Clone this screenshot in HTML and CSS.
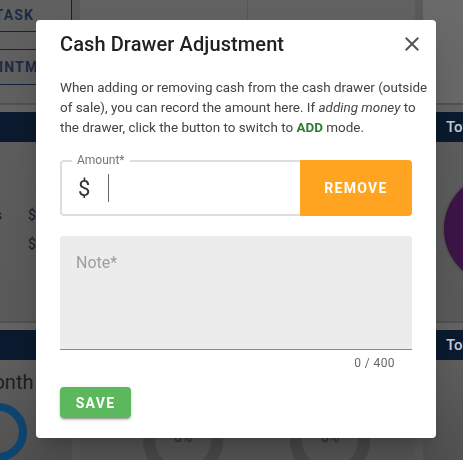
FILE: index.html
```html
<!DOCTYPE html>
<html lang="en">
<head>
<meta charset="utf-8">
<title>Cash Drawer Adjustment</title>
<link rel="stylesheet" href="styles.css">
</head>
<body>
<div class="page">
  <div class="top">
    <div class="side">
      <div class="sbtn sbtn-task"><span class="shift-task">ADD TASK</span></div>
      <div class="sbtn sbtn-appt"><span class="shift-appt">APPOINTMENT</span></div>
    </div>
    <div class="strip"></div>
    <div class="topcard">
      <div class="tcell"></div>
      <div class="tcell"></div>
    </div>
    <div class="strip"></div>
    <div class="rest"></div>
  </div>
  <div class="sep"></div>
  <div class="bar"><span class="bar-title">Totals</span></div>
  <div class="mid">
    <div class="rows">
      <div class="row"><span class="lbl">Sales</span><span class="val">$1</span></div>
      <div class="row"><span class="lbl"></span><span class="val">$</span></div>
    </div>
    <div class="pie"></div>
  </div>
  <div class="sep"></div>
  <div class="bar"><span class="bar-title">Totals</span></div>
  <div class="low">
    <div class="lowside">
      <div class="month">Month</div>
      <div class="donut"></div>
    </div>
    <div class="strip"></div>
    <div class="lowcard">
      <div class="ring"><span>0%</span></div>
      <div class="ring"><span>0%</span></div>
    </div>
    <div class="strip"></div>
  </div>
</div>

<div class="overlay">
  <div class="modal">
    <div class="mhead">
      <h2 class="mtitle">Cash Drawer Adjustment</h2>
      <button class="close" aria-label="Close">
        <svg viewBox="0 0 24 24" width="24" height="24"><path d="M19,6.41L17.59,5L12,10.59L6.41,5L5,6.41L10.59,12L5,17.59L6.41,19L12,13.41L17.59,19L19,17.59L13.41,12L19,6.41Z"/></svg>
      </button>
    </div>
    <p class="desc">When adding or removing cash from the cash drawer (outside<br>of sale), you can record the amount here. If <em>adding money</em> to<br>the drawer, click the button to switch to <strong class="add">ADD</strong> mode.</p>
    <div class="amount">
      <span class="amount-label">Amount*</span>
      <span class="dollar">$</span>
      <span class="caret"></span>
      <button class="remove">REMOVE</button>
    </div>
    <div class="note">
      <span class="note-ph">Note*</span>
    </div>
    <div class="counter">0 / 400</div>
    <div class="actions">
      <button class="save">SAVE</button>
    </div>
  </div>
</div>
</body>
</html>
```

FILE: styles.css
```css
* { box-sizing: border-box; }
html, body { margin: 0; padding: 0; }
body {
  width: 463px;
  height: 460px;
  overflow: hidden;
  font-family: Roboto, "Liberation Sans", Arial, sans-serif;
  background: #606060;
}

/* ---------- dimmed background page ---------- */
.page {
  width: 463px;
  height: 460px;
  display: flex;
  flex-direction: column;
  background: #616161;
  overflow: hidden;
}
.top {
  height: 103px;
  display: flex;
  flex: none;
}
.side {
  width: 72px;
  border-right: 1px solid #14233b;
  overflow: hidden;
  display: flex;
  flex-direction: column;
}
.sbtn {
  font-size: 14px;
  font-weight: 700;
  letter-spacing: 1.2px;
  color: #1d2b45;
  white-space: nowrap;
  display: flex;
  align-items: center;
}
.sbtn-task {
  height: 32px;
  border-bottom: 1px solid #14233b;
  padding-bottom: 2px;
}
.sbtn-appt {
  margin-top: 17px;
  height: 36px;
  border-top: 1px solid #14233b;
  border-bottom: 1px solid #14233b;
}
.shift-task { margin-left: -41px; }
.shift-appt { margin-left: -43px; }
.strip {
  width: 8px;
  flex: none;
  background: #5a5a5a;
}
.top > .strip:first-of-type { margin-left: 10px; }
.topcard {
  width: 335px;
  display: flex;
  background: #626262;
}
.tcell {
  flex: 1;
  border-right: 1px solid #585858;
}
.tcell:last-child { border-right: none; }
.rest { flex: 1; background: #6a6a6a; }

.sep {
  height: 9px;
  flex: none;
  border-top: 2px solid #525252;
  background: #646464;
}
.bar {
  height: 30px;
  flex: none;
  background: #0b1a2f;
  display: flex;
  align-items: center;
  justify-content: flex-end;
}
.bar-title {
  width: 17px;
  overflow: hidden;
  color: #c9ced6;
  font-size: 15px;
  font-weight: 500;
  white-space: nowrap;
}
.mid {
  height: 179px;
  flex: none;
  display: flex;
  justify-content: space-between;
  align-items: center;
  background: linear-gradient(#5e5e5e, #5a5a5a);
}
.rows {
  display: flex;
  flex-direction: column;
  gap: 9px;
  margin-top: -4px;
}
.row {
  display: flex;
  font-size: 14px;
  color: #1c1c1c;
  height: 20px;
  align-items: center;
}
.lbl { width: 28px; text-indent: -32px; overflow: hidden; white-space: nowrap; }
.pie {
  width: 110px;
  height: 110px;
  border-radius: 50%;
  background: #3c1546;
  box-shadow: 0 0 3px rgba(0,0,0,.4);
  margin-right: -91px;
  margin-top: -6px;
}
.low {
  flex: 1;
  display: flex;
  background: linear-gradient(#5f5f5f, #4f4f4f);
}
.lowside {
  width: 72px;
  padding-top: 10px;
  overflow: hidden;
}
.month {
  font-size: 20px;
  color: #1e1e1e;
  text-indent: -24px;
  white-space: nowrap;
  line-height: 24px;
}
.donut {
  width: 58px;
  height: 58px;
  border-radius: 50%;
  border: 8px solid #0e4672;
  margin-left: -31px;
  margin-top: 9px;
}
.low > .strip:first-of-type { margin-left: 10px; }
.lowcard {
  width: 335px;
  display: flex;
  padding-left: 63px;
  gap: 67px;
  padding-top: 40px;
  background: #575757;
}
.ring {
  width: 80px;
  height: 80px;
  border-radius: 50%;
  border: 12px solid #4a4a4a;
  display: flex;
  justify-content: center;
  padding-top: 17px;
  font-size: 14px;
  color: #2a2a2a;
}

/* ---------- modal ---------- */
.overlay {
  position: fixed;
  inset: 0;
}
.modal {
  position: absolute;
  left: 36px;
  top: 20px;
  width: 400px;
  height: 418px;
  background: #fff;
  border-radius: 4px;
  box-shadow: 0 11px 15px -7px rgba(0,0,0,.2), 0 24px 38px 3px rgba(0,0,0,.14);
  padding: 8px 24px 0;
  display: flex;
  flex-direction: column;
}
.mhead {
  display: flex;
  align-items: center;
  justify-content: space-between;
  height: 32px;
}
.mtitle {
  margin: 0;
  font-size: 20px;
  font-weight: 500;
  line-height: 32px;
  color: #212121;
  letter-spacing: 0.1px;
}
.close {
  border: 0;
  background: none;
  padding: 0;
  width: 24px;
  height: 24px;
  margin-right: -12px;
  fill: #555;
  display: flex;
}
.desc {
  margin: 18px -16px 0 0;
  font-size: 13.45px;
  line-height: 20px;
  color: #444;
  white-space: nowrap;
}
.desc em { font-style: italic; }
.add { color: #2e7d32; font-weight: 700; }

.amount {
  position: relative;
  margin-top: 22px;
  height: 56px;
  border: 2px solid #dedede;
  border-radius: 4px;
  display: flex;
  align-items: center;
  padding-left: 16px;
}
.amount-label {
  position: absolute;
  left: 10px;
  top: -10px;
  padding: 0 5px;
  background: #fff;
  font-size: 12px;
  line-height: 16px;
  color: #757575;
}
.dollar {
  font-size: 22px;
  color: #333;
  width: 30px;
}
.caret {
  width: 1px;
  height: 28px;
  background: #666;
}
.remove {
  margin-left: auto;
  align-self: stretch;
  margin-top: -2px;
  margin-bottom: -2px;
  margin-right: -2px;
  width: 112px;
  border: 0;
  border-radius: 0 4px 4px 0;
  background: #ffa421;
  color: #fff;
  font-family: inherit;
  font-size: 14px;
  font-weight: 700;
  letter-spacing: 1.3px;
}
.note {
  margin-top: 20px;
  height: 114px;
  background: #ececec;
  border-radius: 4px 4px 0 0;
  border-bottom: 1px solid #8a8a8a;
  padding: 17px 16px 0;
}
.note-ph {
  font-size: 16px;
  line-height: 20px;
  color: #9e9e9e;
}
.counter {
  text-align: right;
  padding-right: 17px;
  font-size: 12px;
  line-height: 16px;
  margin-top: 5px;
  color: #666;
  letter-spacing: 0.4px;
}
.actions {
  margin-top: 16px;
}
.save {
  width: 71px;
  height: 31px;
  border: 0;
  border-radius: 4px;
  background: #5cb85c;
  color: #fff;
  font-family: inherit;
  font-size: 14px;
  font-weight: 700;
  letter-spacing: 1.3px;
  box-shadow: 0 3px 1px -2px rgba(0,0,0,.2), 0 2px 2px 0 rgba(0,0,0,.14), 0 1px 5px 0 rgba(0,0,0,.12);
}
```
